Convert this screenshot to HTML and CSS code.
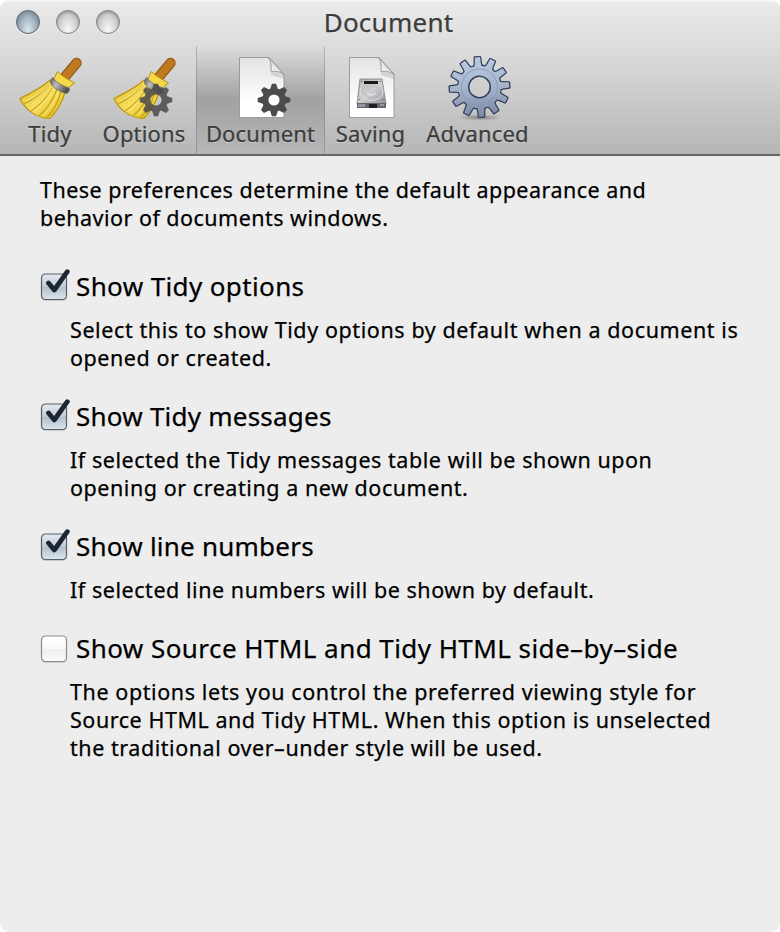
FILE: index.html
```
<!DOCTYPE html>
<html lang="en">
<head>
<meta charset="utf-8">
<title>Document</title>
<link rel="stylesheet" href="styles.css">
</head>
<body>
<svg class="defs" width="0" height="0">
  <defs>
    <linearGradient id="straw" x1="0" y1="0" x2="1" y2="1"><stop offset="0" stop-color="#d8b51c"/><stop offset=".5" stop-color="#f6df62"/><stop offset="1" stop-color="#dcb711"/></linearGradient>
    <linearGradient id="band" x1="0" y1="0" x2="1" y2=".5"><stop offset="0" stop-color="#555"/><stop offset=".4" stop-color="#bdbdbd"/><stop offset="1" stop-color="#505050"/></linearGradient>
    <linearGradient id="paper" x1="0" y1="0" x2="0" y2="1"><stop offset="0" stop-color="#e3e3e3"/><stop offset=".75" stop-color="#fff"/></linearGradient>
    <linearGradient id="fold" x1="0" y1="1" x2=".8" y2="0"><stop offset="0" stop-color="#fff"/><stop offset="1" stop-color="#ccc"/></linearGradient>
    <linearGradient id="steel" x1="0" y1="0" x2="0" y2="1"><stop offset="0" stop-color="#bccce0"/><stop offset=".5" stop-color="#a6b4cb"/><stop offset="1" stop-color="#7a87a6"/></linearGradient>
    <linearGradient id="disk" x1="0" y1="0" x2="1" y2="1"><stop offset="0" stop-color="#b5b5b9"/><stop offset=".5" stop-color="#cdcdd0"/><stop offset="1" stop-color="#929297"/></linearGradient>
    <radialGradient id="shade"><stop offset="0" stop-color="#555" stop-opacity=".65"/><stop offset="1" stop-color="#777" stop-opacity="0"/></radialGradient>
    <g id="broom">
      <path d="M47 21 L59.500 6" fill="none" stroke="#935713" stroke-width="10.400" stroke-linecap="round"/>
      <path d="M47 21 L59.500 6" fill="none" stroke="#bf7a20" stroke-width="8" stroke-linecap="round"/>
      <path d="M33 23 C26 30 12 37 3 41.500 C8 53 20 61 32.500 61.500 C39 56 46 44 48 35 Z" fill="url(#straw)" stroke="#bd950f" stroke-width="1.200"/>
      <path d="M32 28 C25 36 15 43 7 47 M36 31 C30 40 22 49 14 54 M40 32 C36 43 29 53 22 59 M44 34 C41 46 35 56 29 61" fill="none" stroke="#c9a419" stroke-width="1.200"/>
      <path d="M33 27 C27 34 18 40 9 44 M37 30 C32 40 25 48 18 54 M42 33 C39 43 33 52 27 58" fill="none" stroke="#fff09a" stroke-width=".8"/>
      <path d="M40.500 14.500 C44 18.500 51 22.500 57.500 26 L52.500 30 L49 33 L36 24 Z" fill="#f4d94a" stroke="#b8910b" stroke-width="1"/>
      <path d="M36 20.500 C39 26 46 29 52 31 C53 33 51.500 35.500 50 36.500 C43 35 36 31 33.500 26 C33.500 23 34.500 21.500 36 20.500 Z" fill="url(#band)" stroke="#666" stroke-width=".8"/>
    </g>
    <path id="tooth" d="M-4 -10 L-3.500 -12 L-2.100 -16.300 L2.100 -16.300 L3.500 -12 L4 -10 Z"/>
    <g id="smallgear" fill="#4b4b4b">
      <circle r="8.700" fill="none" stroke="#4b4b4b" stroke-width="6.200"/>
      <use href="#tooth"/><use href="#tooth" transform="rotate(45)"/><use href="#tooth" transform="rotate(90)"/><use href="#tooth" transform="rotate(135)"/><use href="#tooth" transform="rotate(180)"/><use href="#tooth" transform="rotate(225)"/><use href="#tooth" transform="rotate(270)"/><use href="#tooth" transform="rotate(315)"/>
    </g>
    <g id="page">
      <path d="M.5 .5 H30 L45 17 V60.500 H.5 Z" fill="url(#paper)" stroke="#8c8c8c" stroke-width=".8"/>
      <path d="M31 5 L32 18 L45 22 V18 Z" fill="#888" opacity=".25"/>
      <path d="M29.500 .5 C32 4 32.500 9 32 14.500 C37 14 42 14.500 45 17.500 Z" fill="url(#fold)" stroke="#909090" stroke-width=".8"/>
    </g>
    <path id="cog" d="M-4 -20 L-3.100 -23 L-2.600 -29.800 L2.600 -29.800 L3.100 -23 L4 -20 Z"/>
    <g id="cogs">
      <circle r="21.200"/>
      <use href="#cog"/><use href="#cog" transform="rotate(30)"/><use href="#cog" transform="rotate(60)"/><use href="#cog" transform="rotate(90)"/><use href="#cog" transform="rotate(120)"/><use href="#cog" transform="rotate(150)"/><use href="#cog" transform="rotate(180)"/><use href="#cog" transform="rotate(210)"/><use href="#cog" transform="rotate(240)"/><use href="#cog" transform="rotate(270)"/><use href="#cog" transform="rotate(300)"/><use href="#cog" transform="rotate(330)"/>
    </g>
    <clipPath id="cogclip">
      <circle r="21.200"/>
      <use href="#cog"/><use href="#cog" transform="rotate(30)"/><use href="#cog" transform="rotate(60)"/><use href="#cog" transform="rotate(90)"/><use href="#cog" transform="rotate(120)"/><use href="#cog" transform="rotate(150)"/><use href="#cog" transform="rotate(180)"/><use href="#cog" transform="rotate(210)"/><use href="#cog" transform="rotate(240)"/><use href="#cog" transform="rotate(270)"/><use href="#cog" transform="rotate(300)"/><use href="#cog" transform="rotate(330)"/>
    </clipPath>
    <mask id="hole" maskUnits="userSpaceOnUse" x="-34" y="-34" width="68" height="68"><rect x="-34" y="-34" width="68" height="68" fill="#fff"/><circle r="10.300" fill="#000"/></mask>
  </defs>
</svg>
<main class="window">
  <header class="chrome">
    <div class="titlebar">
      <div class="lights"><i class="light close"></i><i class="light"></i><i class="light"></i></div>
      <h1 class="title">Document</h1>
    </div>
    <nav class="toolbar">
      <a class="item tidy"><svg class="icon" viewBox="0 0 66 66"><use href="#broom"/></svg><span>Tidy</span></a>
      <a class="item options"><svg class="icon" viewBox="0 0 66 66"><use href="#broom"/><use href="#smallgear" transform="translate(45 43)" opacity=".86"/></svg><span>Options</span></a>
      <a class="item document selected"><svg class="icon" viewBox="0 0 66 66"><use href="#page" x="11" y="0"/><use href="#smallgear" transform="translate(46 43)"/></svg><span>Document</span></a>
      <a class="item saving"><svg class="icon" viewBox="0 0 66 66"><use href="#page" x="11" y="0"/>
        <path d="M22 22 H44 L48 47 H19 Z" fill="url(#disk)" stroke="#77777b" stroke-width=".8"/>
        <ellipse cx="33.500" cy="34" rx="11.500" ry="9.500" fill="none" stroke="#e3e3e5" stroke-width=".9"/>
        <path d="M29 35.500 C31 39 36 39 38 35.500" fill="none" stroke="#f6f6f6" stroke-width="1"/>
        <path d="M26 24 H40 V27 H26 Z" fill="#1b1b1d"/><path d="M19 46 H48 V51 H19 Z" fill="#66666d"/><path d="M31 47 H39 V51 H31 Z" fill="#202023"/><path d="M20 47 H27 V50 H20 Z M42 47 H46 V49 H42 Z" fill="#9494a0"/>
        <path d="M21 42 h1 v1 h-1 Z M44.500 42 h1 v1 h-1 Z M23 24 h1 v1 h-1 Z M42 24 h1 v1 h-1 Z" fill="#555"/></svg><span>Saving</span></a>
      <a class="item advanced"><svg class="icon" viewBox="0 0 66 66"><ellipse cx="35" cy="60.500" rx="23" ry="3.500" fill="url(#shade)"/><g transform="translate(34.500 30) rotate(-4)"><g mask="url(#hole)"><use href="#cogs" fill="#303d5a" stroke="#303d5a" stroke-width="2.400" stroke-linejoin="round"/><g clip-path="url(#cogclip)"><rect x="-31" y="-31" width="62" height="62" fill="url(#steel)"/></g><circle r="18" fill="none" stroke="#8797b4" stroke-width=".8"/></g><circle r="10.800" fill="none" stroke="#35435f" stroke-width="1.500"/></g></svg><span>Advanced</span></a>
    </nav>
  </header>
  <section class="content">
    <p class="intro">These preferences determine the default appearance and<br>behavior of documents windows.</p>
    <div class="pref"><label class="check"><svg class="box" viewBox="0 0 32 34"><use href="#cb-on"/></svg><span class="wide">Show Tidy options</span></label>
      <p><span class="wider">Select this to show Tidy options by default when a document is</span><br>opened or created.</p></div>
    <div class="pref"><label class="check"><svg class="box" viewBox="0 0 32 34"><use href="#cb-on"/></svg><span>Show Tidy messages</span></label>
      <p>If selected the Tidy messages table will be shown upon<br>opening or creating a new document.</p></div>
    <div class="pref"><label class="check"><svg class="box" viewBox="0 0 32 34"><use href="#cb-on"/></svg><span>Show line numbers</span></label>
      <p>If selected line numbers will be shown by default.</p></div>
    <div class="pref"><label class="check"><svg class="box" viewBox="0 0 32 34"><use href="#cb-off"/></svg><span class="widest">Show Source HTML and Tidy HTML side–by–side</span></label>
      <p><span class="wider">The options lets you control the preferred viewing style for</span><br>Source HTML and Tidy HTML. When this option is unselected<br>the traditional over–under style will be used.</p></div>
  </section>
</main>
<svg class="defs" width="0" height="0"><defs>
  <linearGradient id="on" x1="0" y1="0" x2="0" y2="1"><stop offset="0" stop-color="#e6eaee"/><stop offset=".48" stop-color="#c4ced8"/><stop offset=".52" stop-color="#b2bfcc"/><stop offset="1" stop-color="#dce6ee"/></linearGradient>
  <linearGradient id="off" x1="0" y1="0" x2="0" y2="1"><stop offset="0" stop-color="#fff"/><stop offset=".48" stop-color="#fafafa"/><stop offset=".52" stop-color="#eee"/><stop offset="1" stop-color="#fbfbfb"/></linearGradient>
  <g id="cb-on"><rect x="1" y="6" width="26" height="26" rx="4.500" fill="#aaa" opacity=".5"/><rect x="1.500" y="5" width="25" height="25.500" rx="4" fill="url(#on)" stroke="#596069" stroke-width="1.200"/><path d="M8.500 14 L14.300 21 L27.300 2.700" fill="none" stroke="#1c2733" stroke-width="4.800" stroke-linecap="round" stroke-linejoin="round"/></g>
  <g id="cb-off"><rect x="1" y="6" width="26" height="26" rx="4.500" fill="#aaa" opacity=".5"/><rect x="1.500" y="5" width="25" height="25.500" rx="4" fill="url(#off)" stroke="#8b8b8b" stroke-width="1.200"/></g>
</defs></svg>
</body>
</html>
```
FILE: styles.css
```
* { box-sizing: border-box; }
body { margin: 0; background: #fff; font-family: "Noto Sans", sans-serif; color: #000; -webkit-text-stroke: .25px currentColor; }
h1, p { margin: 0; font-weight: 400; }
.defs { display: block; width: 0; height: 0; }
.window { height: 932px; background: #ededed; border-radius: 9px; overflow: hidden; }
.chrome { height: 156px; background: linear-gradient(#ebebeb, #d5d5d5 45%, #b6b6b6); border-bottom: 2px solid #686868; box-shadow: inset 0 2px #f5f5f5; color: #3c3c3c; text-shadow: 0 1px rgba(255,255,255,.45); }
.titlebar { display: grid; grid-template-columns: 120px 1fr 120px; height: 46px; padding-bottom: 2px; align-items: center; }
.lights { display: flex; gap: 16px; padding: 0 0 2px 16px; }
.light { width: 24px; height: 24px; border-radius: 50%; border: 1.500px solid #7c7c7c; background: radial-gradient(ellipse at 50% 85%, #f8f8f8, #d8d8d8 45%, #b2b2b2 85%); box-shadow: 0 1px #eee, inset 0 2px 2px #8888; }
.close { border-color: #59646e; background: radial-gradient(ellipse at 50% 85%, #d9e7ef, #a4b4c0 50%, #70818e 90%); }
.title { text-align: center; font-size: 26px; line-height: 44px; white-space: nowrap; letter-spacing: .25px; margin-left: -3px; padding-bottom: 1px; }
.toolbar { display: flex; height: 108px; padding-left: 8px; }
.item { display: flex; flex-direction: column; align-items: center; padding-top: 11px; font-size: 22px; line-height: 28px; white-space: nowrap; letter-spacing: .15px; }
.item span { margin-top: -4px; }
.icon { width: 66px; height: 66px; flex: none; display: block; overflow: visible; }
.tidy { width: 84px; }
.options { width: 104px; }
.document { width: 129px; }
.saving { width: 91px; }
.advanced { width: 123px; }
.selected { background: linear-gradient(90deg, rgba(70,70,70,.4), transparent 1.500px, transparent calc(100% - 1.500px), rgba(70,70,70,.35)), linear-gradient(rgba(0,0,0,0), rgba(0,0,0,.2) 50%, rgba(0,0,0,.12) 70%, rgba(0,0,0,0)); }
.content { padding: 20px 0 0 40px; font-size: 21.500px; line-height: 28px; white-space: nowrap; letter-spacing: .55px; }
.intro { letter-spacing: .475px; }
.wider { letter-spacing: .595px; }
.pref { margin-top: 27px; }
.intro + .pref { margin-top: 37px; }
.check { display: flex; align-items: center; height: 34px; font-size: 26px; line-height: 34px; letter-spacing: .23px; }
.wide { letter-spacing: .38px; }
.widest { letter-spacing: .44px; }
.box { width: 32px; height: 34px; margin-right: 4px; flex: none; }
.pref p { padding: 13px 0 0 30px; }
```
